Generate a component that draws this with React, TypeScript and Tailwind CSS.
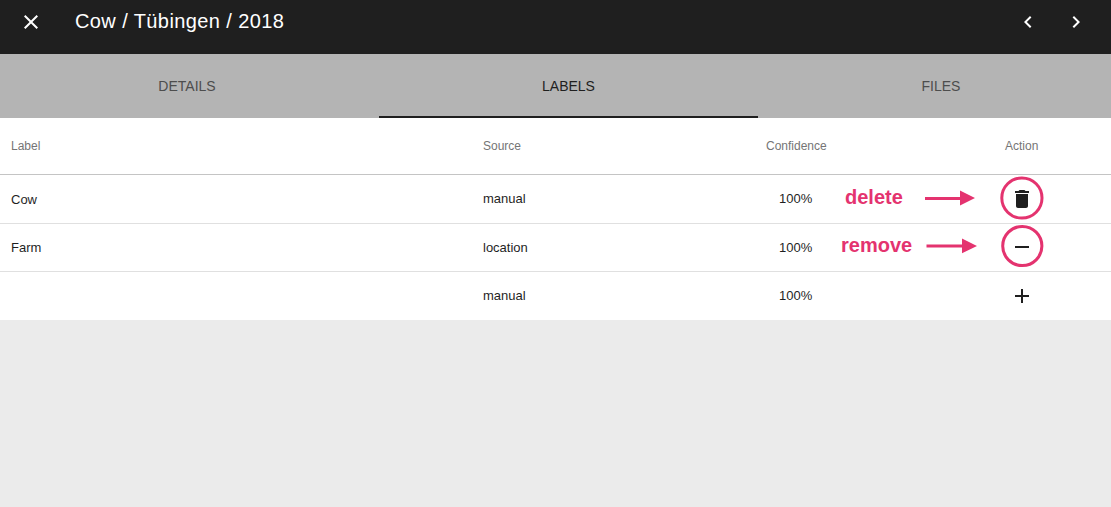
import React from "react";

type IconProps = { d: string; className?: string };

function Icon({ d, className = "" }: IconProps) {
  return (
    <svg viewBox="0 0 24 24" className={`block size-6 shrink-0 fill-current ${className}`} aria-hidden="true">
      <path d={d} />
    </svg>
  );
}

const icons = {
  close: "M19 6.41L17.59 5 12 10.59 6.41 5 5 6.41 10.59 12 5 17.59 6.41 19 12 13.41 17.59 19 19 17.59 13.41 12z",
  previous: "M15.41 7.41L14 6l-6 6 6 6 1.41-1.41L10.83 12z",
  next: "M10 6L8.59 7.41 13.17 12l-4.58 4.59L10 18l6-6z",
  trash: "M6 19c0 1.1.9 2 2 2h8c1.1 0 2-.9 2-2V7H6v12zM19 4h-3.5l-1-1h-5l-1 1H5v2h14V4z",
  minus: "M19 13H5v-2h14v2z",
  plus: "M19 13h-6v6h-2v-6H5v-2h6V5h2v6h6v2z",
};

const columns = "grid grid-cols-[472px_283px_183px_1fr]";

type RowProps = {
  label: string;
  source: string;
  icon: string;
  action: string;
  className: string;
  labelClass?: string;
  iconClass: string;
};

function Row({ label, source, icon, action, className, labelClass = "", iconClass }: RowProps) {
  return (
    <div className={`${columns} pl-[11px] text-[13px] leading-4 text-[#1f1f1f] ${className}`}>
      <span className={labelClass}>{label}</span>
      <span>{source}</span>
      <span className="pl-[13px]">100%</span>
      <button aria-label={action} className={`ml-[61px] size-6 ${iconClass}`}>
        <Icon d={icon} />
      </button>
    </div>
  );
}

function Annotations() {
  return (
    <div className="pointer-events-none absolute inset-0 text-[20px] leading-6 font-bold text-[#e4336f]">
      <span className="absolute top-[67px] left-[845px]">delete</span>
      <span className="absolute top-[115px] left-[841px]">remove</span>
      <svg className="absolute inset-0 h-[202px] w-[1111px]" viewBox="0 0 1111 202">
        <g fill="currentColor">
          <path d="M925 79h35v-6.5l15 7.5-15 7.5V82h-35z" />
          <path d="M926.5 126.5H962v-6l15 7.5-15 7.3v-5.8h-35.500z" />
        </g>
        <g fill="none" stroke="currentColor" strokeWidth="3">
          <circle cx="1021.900" cy="80" r="20.100" />
          <circle cx="1022.300" cy="128" r="19.600" />
        </g>
      </svg>
    </div>
  );
}

export default function App() {
  return (
    <div className="h-[507px] w-full overflow-hidden bg-[#ebebeb] font-['Liberation_Sans',Arial,sans-serif]">
      <header className="flex h-[54px] items-start bg-[#1f1f1f] pt-[10px] pr-[23px] pl-[19px] text-white">
        <button aria-label="Close">
          <Icon d={icons.close} />
        </button>
        <h1 className="-mt-px ml-8 text-[20px] leading-6 tracking-[0.4px]">Cow / Tübingen / 2018</h1>
        <nav className="ml-auto flex gap-6">
          <button aria-label="Previous">
            <Icon d={icons.previous} />
          </button>
          <button aria-label="Next">
            <Icon d={icons.next} />
          </button>
        </nav>
      </header>

      <div className="grid h-16 grid-cols-[379px_379px_1fr] bg-[#b4b4b4] text-sm text-[#4d4d4d]">
        <button className="pr-[5px]">DETAILS</button>
        <button className="border-b-2 border-[#1f1f1f] pt-[2px] text-[#1f1f1f]">LABELS</button>
        <button className="pl-[13px]">FILES</button>
      </div>

      <main className="relative bg-white">
        <div className={`${columns} h-[57px] border-b border-[#c4c4c4] pt-5 pl-[11px] text-xs text-[#757575]`}>
          <span>Label</span>
          <span>Source</span>
          <span>Confidence</span>
          <span className="pl-14">Action</span>
        </div>
        <Row label="Cow" source="manual" icon={icons.trash} action="Delete" className="h-[49px] border-b border-[#e0e0e0] pt-4" labelClass="pt-px" iconClass="-mt-1" />
        <Row label="Farm" source="location" icon={icons.minus} action="Remove" className="h-12 border-b border-[#e0e0e0] pt-4" iconClass="-mt-[5px]" />
        <Row label="" source="manual" icon={icons.plus} action="Add" className="h-12 pt-4" iconClass="-mt-1" />
        <Annotations />
      </main>
    </div>
  );
}
